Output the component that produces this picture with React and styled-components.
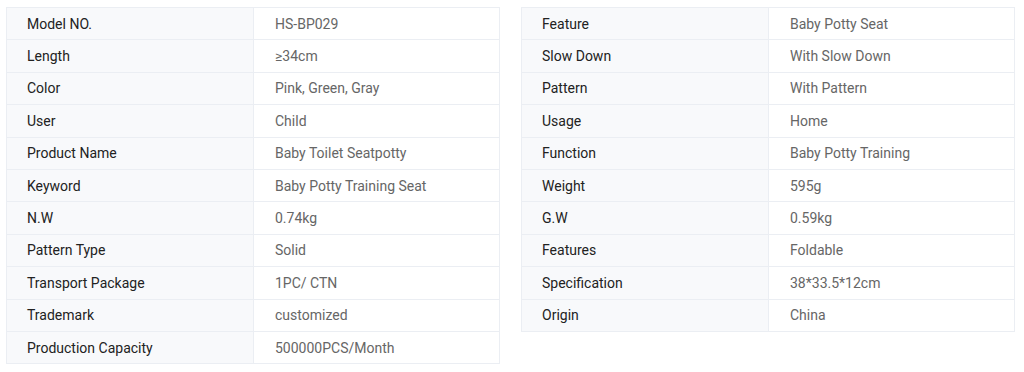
import styled, { createGlobalStyle } from 'styled-components'

const GlobalStyle = createGlobalStyle`
    body {
        margin: 0;
        background: #fff;
        font-family: Roboto, "Liberation Sans", Arial, sans-serif;
    }
`

const leftRows = [
    ['Model NO.', 'HS-BP029'],
    ['Length', '≥34cm'],
    ['Color', 'Pink, Green, Gray'],
    ['User', 'Child'],
    ['Product Name', 'Baby Toilet Seatpotty'],
    ['Keyword', 'Baby Potty Training Seat'],
    ['N.W', '0.74kg'],
    ['Pattern Type', 'Solid'],
    ['Transport Package', '1PC/ CTN'],
    ['Trademark', 'customized'],
    ['Production Capacity', '500000PCS/Month'],
]

const rightRows = [
    ['Feature', 'Baby Potty Seat'],
    ['Slow Down', 'With Slow Down'],
    ['Pattern', 'With Pattern'],
    ['Usage', 'Home'],
    ['Function', 'Baby Potty Training'],
    ['Weight', '595g'],
    ['G.W', '0.59kg'],
    ['Features', 'Foldable'],
    ['Specification', '38*33.5*12cm'],
    ['Origin', 'China'],
]

const SpecTable = ({ rows }) => (
    <Table>
        {rows.map(([label, value]) => (
            <Row key={label}>
                <Label>{label}</Label>
                <Value>{value}</Value>
            </Row>
        ))}
    </Table>
)

const App = () => {
    return (
        <>
            <GlobalStyle />
            <Page>
                <SpecTable rows={leftRows} />
                <SpecTable rows={rightRows} />
            </Page>
        </>
    )
}

export default App

const Page = styled.div`
    display: flex;
    align-items: flex-start;
    gap: 21px;
    padding: 7px 9px 0 6px;
`

const Table = styled.div`
    width: 494px;
    border: 1px solid #ebeef3;
    border-bottom: none;
    display: flex;
    flex-direction: column;
`

const Row = styled.div`
    display: grid;
    grid-template-columns: 247px 1fr;
    height: 31.4px;
    border-bottom: 1px solid #ebeef3;
    font-size: 14px;
`

const Label = styled.div`
    background: #f8f9fb;
    border-right: 1px solid #ebeef3;
    color: #222;
    padding-left: 20px;
    display: flex;
    align-items: center;
`

const Value = styled.div`
    color: #666;
    padding-left: 21px;
    display: flex;
    align-items: center;
`
